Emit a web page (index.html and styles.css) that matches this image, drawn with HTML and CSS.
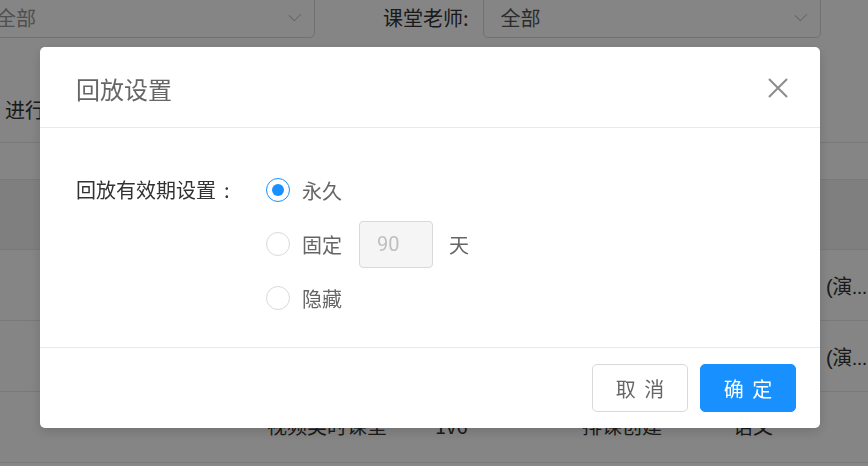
FILE: index.html
```html
<!DOCTYPE html>
<html lang="zh-CN">
<head>
    <meta charset="UTF-8">
    <title>回放设置</title>
    <link rel="stylesheet" href="styles.css">
</head>
<body>
    <div class="page">
        <div class="filter-bar">
            <div class="select select-left"><span class="select-text">全部</span><span class="arrow"></span></div>
            <div class="filter-label">课堂老师:</div>
            <div class="select select-right"><span class="select-text">全部</span><span class="arrow"></span></div>
        </div>
        <div class="tabs"><span>进行中</span></div>
        <div class="table">
            <div class="row row-blank"></div>
            <div class="row row-head"></div>
            <div class="row"><span class="cell c1"></span><span class="cell c2"></span><span class="cell c3"></span><span class="cell c4"></span><span class="cell c5">(演...</span></div>
            <div class="row"><span class="cell c1"></span><span class="cell c2"></span><span class="cell c3"></span><span class="cell c4"></span><span class="cell c5">(演...</span></div>
            <div class="row"><span class="cell c1">视频类时课堂</span><span class="cell c2">1v6</span><span class="cell c3">排课创建</span><span class="cell c4">语文</span><span class="cell c5"></span></div>
        </div>
    </div>

    <div class="mask"></div>

    <div class="modal">
        <div class="modal-header">
            <div class="modal-title">回放设置</div>
            <svg class="modal-close" width="20" height="20" viewBox="0 0 20 20">
                <path d="M1 1 L19 19 M19 1 L1 19" stroke="#8c8c8c" stroke-width="2" fill="none"/>
            </svg>
        </div>
        <div class="modal-body">
            <div class="form-item">
                <div class="form-label">回放有效期设置<span class="colon">:</span></div>
                <div class="radio-group">
                    <label class="radio-row"><span class="radio checked"></span><span class="radio-text">永久</span></label>
                    <label class="radio-row"><span class="radio"></span><span class="radio-text">固定</span><span class="days-input">90</span><span class="unit">天</span></label>
                    <label class="radio-row"><span class="radio"></span><span class="radio-text">隐藏</span></label>
                </div>
            </div>
        </div>
        <div class="modal-footer">
            <button class="btn">取 消</button>
            <button class="btn btn-primary">确 定</button>
        </div>
    </div>
</body>
</html>
```

FILE: styles.css
```css
body { margin: 0; font-family: "Noto Sans CJK SC", "Noto Sans", sans-serif; background: #fff; color: #333; overflow: hidden; }
.page { width: 868px; height: 466px; overflow: hidden; }

.filter-bar { display: flex; align-items: center; height: 45px; margin-top: -7px; }
.select { height: 45px; box-sizing: border-box; border: 1px solid #d9d9d9; border-radius: 5px; display: flex; align-items: center; justify-content: space-between; font-size: 20px; }
.select-left { width: 330px; margin-left: -15px; padding: 4px 14px 0 10px; }
.select-left .select-text { color: #999; }
.select-right { width: 338px; margin-left: 14px; padding: 4px 14px 0 17px; }
.select-right .select-text { color: #555; }
.filter-label { margin-left: 68px; font-size: 20px; color: #333; padding-top: 4px; }
.arrow { width: 9px; height: 9px; border-right: 1.5px solid #bbb; border-bottom: 1.5px solid #bbb; transform: rotate(45deg) scaleX(0.8); margin-bottom: 6px; }

.tabs { height: 105px; box-sizing: border-box; border-bottom: 1px solid #e8e8e8; display: flex; align-items: center; padding: 38px 0 0 5px; font-size: 20px; color: #333; }

.table { display: flex; flex-direction: column; }
.row { height: 70px; border-bottom: 1px solid #e8e8e8; display: grid; grid-template-columns: 267px 168px 147px 151px 93px 42px; align-items: center; font-size: 20px; color: #333; white-space: nowrap; overflow: hidden; }
.row-blank { height: 36px; }
.row-head { height: 69px; background: #f4f4f4; }
.cell.c1 { grid-column: 2; margin-top: -3px; }
.cell.c2 { grid-column: 3; margin-top: -3px; }
.cell.c3 { grid-column: 4; margin-top: -3px; }
.cell.c4 { grid-column: 5; margin-top: -3px; }
.cell.c5 { grid-column: 6; font-family: "Liberation Sans", "Noto Sans CJK SC", sans-serif; letter-spacing: -0.5px; }

.mask { position: fixed; inset: 0; background: rgba(0, 0, 0, 0.48); }

.modal { position: fixed; left: 40px; top: 47px; width: 780px; height: 381px; background: #fff; border-radius: 5px; box-shadow: 0 4px 12px rgba(0,0,0,0.15); display: flex; flex-direction: column; }
.modal-header { height: 81px; box-sizing: border-box; border-bottom: 1px solid #e9e9e9; display: flex; align-items: center; justify-content: space-between; padding: 0 32px 0 36px; }
.modal-title { font-size: 24px; color: #666; line-height: 30px; margin-top: 3px; }
.modal-close { display: block; margin-top: 2px; }

.modal-body { height: 220px; box-sizing: border-box; border-bottom: 1px solid #e9e9e9; padding: 35px 36px 0; }
.form-item { display: flex; }
.form-label { width: 190px; height: 54px; line-height: 54px; font-size: 20px; color: #333; }
.form-label .colon { margin-left: 8px; }
.radio-group { display: flex; flex-direction: column; }
.radio-row { display: flex; align-items: center; height: 54px; font-size: 20px; color: #666; }
.radio { width: 24px; height: 24px; box-sizing: border-box; border: 1px solid #d9d9d9; border-radius: 50%; display: flex; align-items: center; justify-content: center; margin-right: 12px; }
.radio.checked { border-color: #1890ff; }
.radio.checked::after { content: ""; width: 12px; height: 12px; border-radius: 50%; background: #1890ff; }
.days-input { width: 74px; height: 47px; box-sizing: border-box; margin-left: 17px; border: 1px solid #d9d9d9; border-radius: 4px; background: #f5f5f5; color: #bfbfbf; padding-left: 17px; line-height: 45px; font-family: Roboto, "Noto Sans", sans-serif; }
.unit { margin-left: 16px; }

.modal-footer { flex: 1; display: flex; justify-content: flex-end; align-items: flex-start; gap: 12px; padding: 16px 24px 0 0; }
.btn { width: 96px; height: 48px; border: 1px solid #d9d9d9; border-radius: 5px; background: #fff; color: #666; font-size: 20px; font-family: "Noto Sans CJK SC", sans-serif; letter-spacing: 2px; padding: 0 0 0 2px; }
.btn-primary { background: #1890ff; border-color: #1890ff; color: #fff; }
```
